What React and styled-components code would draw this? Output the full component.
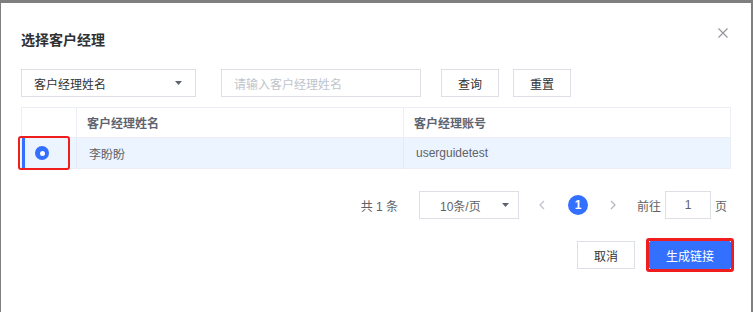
import React from "react";
import styled, { createGlobalStyle } from "styled-components";

const Global = createGlobalStyle`
  html, body { margin: 0; padding: 0; background: #7f7f7f; overflow: hidden; }
  body { font-family: "Liberation Sans", "Noto Sans CJK SC", sans-serif; }
  * { box-sizing: border-box; }
`;

const Page = styled.div`
  height: 312px;
  padding: 3px 0 0 1px;
  overflow: hidden;
`;

const Dialog = styled.div`
  width: 750px;
  min-height: 330px;
  background: #fff;
  padding: 20px 20px 0 20px;
  display: flex;
  flex-direction: column;
`;

const Header = styled.div`
  display: flex;
  justify-content: space-between;
  align-items: flex-start;
`;

const Title = styled.div`
  padding-top: 7px;
  font-size: 14px;
  line-height: 20px;
  font-weight: 700;
  color: #303133;
`;

const CloseBtn = styled.button`
  width: 16px;
  height: 20px;
  padding: 0;
  border: 0;
  background: none;
  display: flex;
  align-items: center;
  justify-content: center;
  color: #909399;
`;

const FilterRow = styled.div`
  display: flex;
  align-items: center;
  margin-top: 19px;
  height: 28px;
`;

const SelectBox = styled.div`
  width: ${(p) => p.$w}px;
  height: 28px;
  border: 1px solid #dcdfe6;
  display: flex;
  align-items: center;
  justify-content: space-between;
  padding: ${(p) => p.$pad};
  font-size: 12px;
  color: ${(p) => p.$color || "#333"};
  margin-left: ${(p) => p.$ml || 0}px;
  background: #fff;
`;

const TextInput = styled.div`
  width: ${(p) => p.$w}px;
  height: 28px;
  border: 1px solid #dcdfe6;
  display: flex;
  align-items: center;
  justify-content: ${(p) => (p.$center ? "center" : "flex-start")};
  padding: 0 12px;
  font-size: 12px;
  color: ${(p) => p.$color};
  margin-left: ${(p) => p.$ml || 0}px;
`;

const Button = styled.button`
  width: ${(p) => p.$w}px;
  height: 28px;
  margin-left: ${(p) => p.$ml || 0}px;
  border: 1px solid ${(p) => (p.$primary ? "#3370ff" : "#dcdfe6")};
  background: ${(p) => (p.$primary ? "#3370ff" : "#fff")};
  color: ${(p) => (p.$primary ? "#fff" : "#333")};
  font-family: inherit;
  font-size: 12px;
  padding: 0;
  display: flex;
  align-items: center;
  justify-content: center;
  position: relative;
  border-radius: ${(p) => (p.$primary ? "2px" : "0")};
`;

const Highlight = styled.span`
  position: absolute;
  pointer-events: none;
  border: ${(p) => p.$bw}px solid #f01d1d;
  border-radius: 3px;
  top: ${(p) => p.$t}px;
  left: ${(p) => p.$l}px;
  right: ${(p) => p.$r}px;
  bottom: ${(p) => p.$b}px;
`;

const Table = styled.div`
  margin-top: 10px;
  border: 1px solid #ebeef5;
  border-bottom: 0;
  display: grid;
  grid-template-columns: 54px 327px 1fr;
`;

const HeadCell = styled.div`
  height: 30px;
  display: flex;
  align-items: center;
  padding-left: 10px;
  font-size: 12px;
  font-weight: 700;
  color: #5e6470;
  border-bottom: 1px solid #ebeef5;
  border-left: ${(p) => (p.$first ? "0" : "1px solid #ebeef5")};
`;

const BodyCell = styled.div`
  height: 31px;
  display: flex;
  align-items: center;
  padding-left: ${(p) => (p.$first ? 13 : 12)}px;
  font-size: 12px;
  color: #606266;
  background: #ecf4ff;
  border-bottom: 1px solid #ebeef5;
  border-left: ${(p) => (p.$first ? "0" : "1px solid #e4ebf5")};
  box-shadow: ${(p) => (p.$first ? "inset 3px 0 0 #3370ff" : "none")};
  position: relative;
`;

const Radio = styled.span`
  width: 14px;
  height: 14px;
  border-radius: 50%;
  background: #3370ff;
  display: flex;
  align-items: center;
  justify-content: center;
  &::after {
    content: "";
    width: 5px;
    height: 5px;
    border-radius: 50%;
    background: #fff;
  }
`;

const Pagination = styled.div`
  margin-top: 22px;
  display: flex;
  align-items: center;
  justify-content: flex-end;
  padding-right: 4px;
  height: 28px;
  font-size: 12px;
  color: #606266;
`;

const PText = styled.span`
  margin-left: ${(p) => p.$ml || 0}px;
  white-space: pre;
`;

const NavBtn = styled.span`
  width: 30px;
  height: 28px;
  display: flex;
  align-items: center;
  justify-content: center;
  margin-left: ${(p) => p.$ml || 0}px;
  color: ${(p) => p.$color};
`;

const PageNum = styled.span`
  width: 20px;
  height: 20px;
  border-radius: 50%;
  background: #3370ff;
  color: #fff;
  font-weight: 700;
  font-size: 12px;
  display: flex;
  align-items: center;
  justify-content: center;
`;

const Footer = styled.div`
  margin-top: 22px;
  display: flex;
  justify-content: flex-end;
`;

const Caret = () => (
  <svg width="7" height="4" viewBox="0 0 7 4">
    <path d="M0 0h7L3.5 4z" fill="#5d6372" />
  </svg>
);

const Chevron = ({ dir }) => (
  <svg width="6" height="10" viewBox="0 0 6 10">
    <path
      d={dir === "left" ? "M5 1 1 5l4 4" : "M1 1l4 4-4 4"}
      fill="none"
      stroke="currentColor"
      strokeWidth="1.3"
    />
  </svg>
);

export default function App() {
  return (
    <>
      <Global />
      <Page>
        <Dialog>
          <Header>
            <Title>选择客户经理</Title>
            <CloseBtn aria-label="close">
              <svg width="10" height="10" viewBox="0 0 10 10">
                <path d="M0.5 0.5l9 9M9.5 0.5l-9 9" stroke="currentColor" strokeWidth="1.1" />
              </svg>
            </CloseBtn>
          </Header>

          <FilterRow>
            <SelectBox $w={175} $pad="0 13px 0 12px">
              <span>客户经理姓名</span>
              <Caret />
            </SelectBox>
            <TextInput $w={200} $ml={25} $color="#c0c4cc">
              请输入客户经理姓名
            </TextInput>
            <Button $w={58} $ml={20}>查询</Button>
            <Button $w={58} $ml={14}>重置</Button>
          </FilterRow>

          <Table>
            <HeadCell $first />
            <HeadCell>客户经理姓名</HeadCell>
            <HeadCell>客户经理账号</HeadCell>
            <BodyCell $first>
              <Radio />
              <Highlight $bw={2} $t={-2} $l={-4} $r={6} $b={-2} />
            </BodyCell>
            <BodyCell>李盼盼</BodyCell>
            <BodyCell>userguidetest</BodyCell>
          </Table>

          <Pagination>
            <PText>共 1 条</PText>
            <SelectBox $w={100} $ml={21} $pad="0 9px 0 20px" $color="#606266">
              <span>10条/页</span>
              <Caret />
            </SelectBox>
            <NavBtn $ml={8} $color="#c0c4cc">
              <Chevron dir="left" />
            </NavBtn>
            <NavBtn $ml={6} $color="#fff">
              <PageNum>1</PageNum>
            </NavBtn>
            <NavBtn $ml={5} $color="#b4b8c0">
              <Chevron dir="right" />
            </NavBtn>
            <PText $ml={9}>前往</PText>
            <TextInput $w={46} $ml={4} $center $color="#606266">1</TextInput>
            <PText $ml={4}>页</PText>
          </Pagination>

          <Footer>
            <Button $w={58}>取消</Button>
            <Button $w={82} $ml={14} $primary>
              生成链接
              <Highlight $bw={3} $t={-4} $l={-4} $r={-4} $b={-4} />
            </Button>
          </Footer>
        </Dialog>
      </Page>
    </>
  );
}
